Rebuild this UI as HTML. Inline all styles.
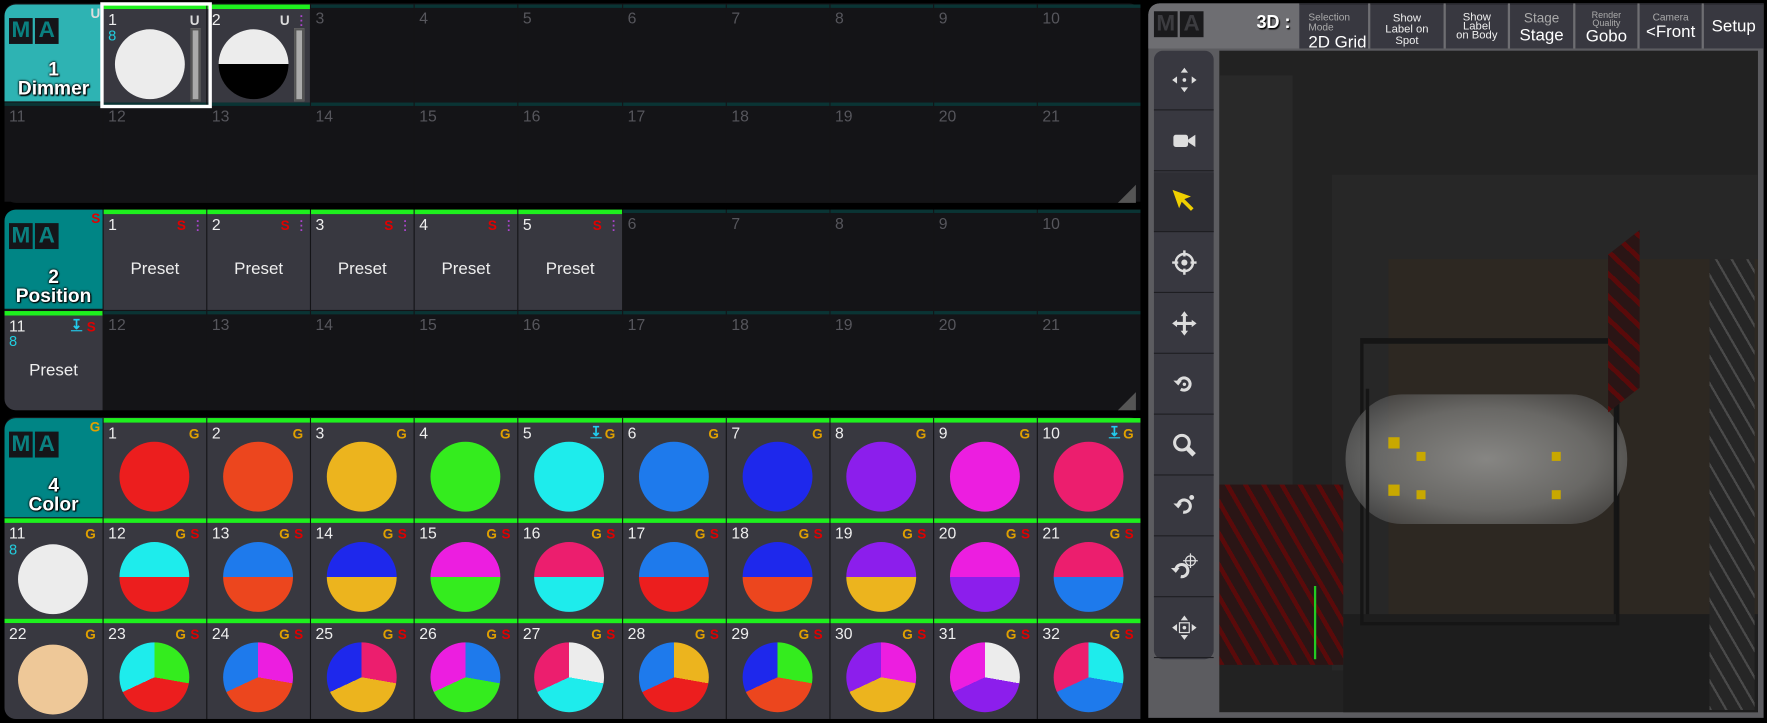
<!DOCTYPE html>
<html><head><meta charset="utf-8">
<style>
*{box-sizing:border-box;margin:0;padding:0}
body{width:1767px;height:723px;background:#000;position:relative;overflow:hidden;font-family:"Liberation Sans",sans-serif}
#w{position:absolute;left:0;top:0;width:1568px;height:642px;transform:scale(1.1269);transform-origin:0 0}
.a{position:absolute}
.win{position:absolute;background:#141417;border-radius:10px;overflow:hidden}
.c{position:absolute;background:#141417}
.c.e{border-top:3px solid #0a3434}
.c.f{background:#383840;border-top:4px solid #1ef01e}
.n{position:absolute;left:4px;top:1px;font-size:14px;color:#56565c}
.f .n{color:#eee}
.ci{position:absolute;border-radius:50%;width:62px;height:62px;left:14px;top:17px}
.hd{position:absolute;background:#008585;border-radius:10px 0 0 0}
.ma{position:absolute;left:4px;top:12px;display:flex;gap:2px}
.ma span{background:#151519;color:#0a8080;font-weight:bold;font-size:20px;width:21px;height:23px;text-align:center;line-height:23px}
.ht{position:absolute;left:0;width:87px;text-align:center;color:#fff;font-weight:bold;font-size:17px;line-height:17px;text-shadow:0 0 2px #000,0 0 2px #000,1px 1px 1px #000}
.bd{position:absolute;font-weight:bold;font-size:12px;top:3px}
.G{color:#e0a000}.S{color:#e00000}.U{color:#ddd}
.pre{position:absolute;left:0;right:0;top:40px;text-align:center;color:#eee;font-size:15px}
.tb{position:absolute;background:#383840;border-top:1px solid #23232a;color:#ddd;text-align:center}
.btn{position:absolute;left:1024px;width:53px;height:53px;border-bottom:1px solid #1e1e22;display:flex;align-items:center;justify-content:center}
</style></head><body><div id="w">

<div class="win" style="left:4px;top:3px;width:1008px;height:177px"></div>
<div class="win" style="left:4px;top:186px;width:1008px;height:178px"></div>
<div class="win" style="left:4px;top:370px;width:1008px;height:268px"></div>
<div id="g"></div>

<div class="a" style="left:1019px;top:3px;width:546px;height:634px;background:#5c5c60;border-radius:10px 0 0 0"></div>
<div class="a" style="left:1019px;top:3px;width:546px;height:40px;background:#6e6e72;border-radius:10px 0 0 0"></div>
<div class="ma" style="left:1024px;top:10px"><span style="color:#3c3c40;background:#1a1a1c">M</span><span style="color:#3c3c40;background:#1a1a1c">A</span></div>
<div class="a" style="left:1115px;top:12px;font-size:16px;font-weight:bold;color:#fff;text-shadow:1px 1px 1px #000">3D :</div>
<div class="tb" style="left:1153px;top:3px;width:61px;height:40px"><div style="font-size:9px;color:#aaa;text-align:left;padding-left:8px;line-height:9px;margin-top:7px">Selection<br>Mode</div><div style="font-size:15px;color:#fff;text-align:left;padding-left:8px">2D Grid</div></div>
<div class="tb" style="left:1216px;top:3px;width:65px;height:40px;font-size:10px;line-height:10px;padding-top:8px;color:#eee">Show<br>Label on<br>Spot</div>
<div class="tb" style="left:1283px;top:3px;width:55px;height:40px;font-size:10px;line-height:8px;padding-top:8px;color:#eee">Show<br>Label<br>on Body</div>
<div class="tb" style="left:1340px;top:3px;width:56px;height:40px"><div style="font-size:12px;color:#aaa;margin-top:5px">Stage</div><div style="font-size:15px;color:#fff">Stage</div></div>
<div class="tb" style="left:1398px;top:3px;width:55px;height:40px"><div style="font-size:8px;color:#aaa;line-height:7px;margin-top:6px">Render<br>Quality</div><div style="font-size:15px;color:#fff">Gobo</div></div>
<div class="tb" style="left:1455px;top:3px;width:55px;height:40px"><div style="font-size:9px;color:#aaa;margin-top:6px">Camera</div><div style="font-size:15px;color:#fff">&lt;Front</div></div>
<div class="tb" style="left:1512px;top:3px;width:53px;height:40px;font-size:15px;color:#fff;padding-top:11px">Setup</div>

<div class="a" style="left:1082px;top:45px;width:478px;height:587px;background:#222;overflow:hidden">
 <div class="a" style="left:0;top:22px;width:65px;height:520px;background:#292929"></div>
 <div class="a" style="left:100px;top:110px;width:380px;height:440px;background:#272727"></div>
 <div class="a" style="left:150px;top:185px;width:330px;height:330px;background:#2d2822"></div>
 <div class="a" style="left:110px;top:500px;width:370px;height:90px;background:#1d1d1d"></div>
 <div class="a" style="left:125px;top:255px;width:230px;height:255px;border:3px solid #151515;border-top-width:5px"></div>
 <div class="a" style="left:112px;top:305px;width:250px;height:115px;border-radius:20%/50%;background:radial-gradient(ellipse at center,rgba(150,150,148,.85) 0%,rgba(120,120,118,.8) 55%,rgba(90,90,90,.6) 85%,rgba(60,60,60,0) 100%)"></div>
 <div class="a" style="left:130px;top:300px;width:3px;height:200px;background:#151515"></div>
 <div class="a" style="left:350px;top:300px;width:3px;height:200px;background:#151515"></div>
 <div class="a" style="left:0;top:385px;width:110px;height:160px;background:repeating-linear-gradient(60deg,#5a0a0a 0 4px,#2a1515 4px 14px)"></div>
 <div class="a" style="left:345px;top:170px;width:28px;height:140px;background:repeating-linear-gradient(60deg,#5a0a0a 0 3px,#2a1515 3px 10px);transform:skewY(-38deg)"></div>
 <div class="a" style="left:435px;top:185px;width:40px;height:400px;background:repeating-linear-gradient(60deg,#4a4a4a 0 2px,#262626 2px 12px)"></div>
 <div class="a" style="left:150px;top:343px;width:10px;height:10px;background:#c8a800"></div>
 <div class="a" style="left:150px;top:385px;width:10px;height:10px;background:#c8a800"></div>
 <div class="a" style="left:175px;top:356px;width:8px;height:8px;background:#c8a800"></div>
 <div class="a" style="left:175px;top:390px;width:8px;height:8px;background:#c8a800"></div>
 <div class="a" style="left:295px;top:356px;width:8px;height:8px;background:#c8a800"></div>
 <div class="a" style="left:295px;top:390px;width:8px;height:8px;background:#c8a800"></div>
 <div class="a" style="left:84px;top:475px;width:2px;height:65px;background:#2c2"></div>
</div>

<div class="a" style="left:1024px;top:45px;width:53px;height:540px;background:#383840;border-radius:8px"></div>
<div id="tb"></div>
</div>
<script>
var g='';
var xs=[];for(var i=0;i<10;i++)xs.push(Math.round(92+i*92.1));
function W(i){return (i==9?1012:xs[i+1]-1)-xs[i];}
function cell(i,y,h,num,filled,inner){
 g+='<div class="c '+(filled?'f':'e')+'" style="left:'+xs[i]+'px;top:'+y+'px;width:'+W(i)+'px;height:'+h+'px"><div class="n">'+num+'</div>'+(inner||'')+'</div>';
}
function badge(t){
 var s='',r=6;for(var k=t.length-1;k>=0;k--){var b=t[k];
  if(b=='D') s+='<div class="bd" style="right:'+r+'px;color:#2ce;top:1px;text-decoration:underline">&#8615;</div>';
  else if(b=='P') s+='<div class="bd" style="right:'+r+'px;color:#a4c;top:2px;font-size:11px;line-height:4px">.<br>.<br>.</div>';
  else s+='<div class="bd '+b+'" style="right:'+r+'px">'+b+'</div>';
  r+=12;}
 return s;}
function hdr(y,h,num,name,bg,bdg){
 g+='<div class="hd" style="left:4px;top:'+y+'px;width:87px;height:'+h+'px;background:'+bg+'"><div class="ma"><span>M</span><span>A</span></div>'+
 '<div class="ht" style="top:'+(h-37)+'px">'+num+'<br>'+name+'</div>'+(bdg?'<div class="bd '+bdg+'" style="right:2px;top:1px">'+bdg+'</div>':'')+'</div>';
}
hdr(4,86,1,'Dimmer','#2eb3b3','U');
var fader='<div class="a" style="right:5px;top:17px;width:9px;height:65px;background:#aaa;border:2px solid #555"></div>';
cell(0,4,87,'1',1,badge(['U'])+'<div class="a" style="left:4px;top:16px;color:#2cd;font-size:13px">8</div><div class="ci" style="left:10px;top:18px;background:#ececec"></div>'+fader);
cell(1,4,87,'2',1,badge(['U','P'])+'<div class="ci" style="left:10px;top:18px;background:linear-gradient(#ececec 50%,#000 50%)"></div>'+fader);
for(var i=2;i<10;i++)cell(i,4,87,i+1,0);
g+='<div class="c e" style="left:4px;top:91px;width:87px;height:88px"><div class="n">11</div></div>';
for(var i=0;i<10;i++)cell(i,91,88,i+12,0);
g+='<div class="a" style="left:89px;top:2px;width:99px;height:94px;border:3px solid #fff"></div>';
hdr(186,88,2,'Position','#008585','S');
for(var i=0;i<10;i++){ if(i<5)cell(i,186,89,i+1,1,badge(['S','P'])+'<div class="pre">Preset</div>'); else cell(i,186,89,i+1,0);}
g+='<div class="c f" style="left:4px;top:276px;width:87px;height:88px;border-radius:0 0 0 10px"><div class="n">11</div>'+badge(['D','S'])+'<div class="a" style="left:4px;top:15px;color:#2cd;font-size:13px">8</div><div class="pre" style="top:40px">Preset</div></div>';
for(var i=0;i<10;i++)cell(i,276,88,i+12,0);
hdr(371,88,4,'Color','#008585','G');
var c1=['#ec1e1e','#ec461e','#ecb41e','#34ec1e','#1eecec','#1e7aec','#1e28ec','#8c1eec','#ec1ee0','#ec1e6e'];
for(var i=0;i<10;i++)cell(i,371,89,i+1,1,badge(i==4||i==9?['D','G']:['G'])+'<div class="ci" style="background:'+c1[i]+'"></div>');
var c2=[['#1eecec','#ec1e1e'],['#1e7aec','#ec461e'],['#1e28ec','#ecb41e'],['#ec1ee0','#34ec1e'],['#ec1e6e','#1eecec'],['#1e7aec','#ec1e1e'],['#1e28ec','#ec461e'],['#8c1eec','#ecb41e'],['#ec1ee0','#8c1eec'],['#ec1e6e','#1e7aec']];
g+='<div class="c f" style="left:4px;top:460px;width:87px;height:89px"><div class="n">11</div>'+badge(['G'])+'<div class="a" style="left:4px;top:16px;color:#2cd;font-size:13px">8</div><div class="ci" style="left:12px;top:19px;background:#ececec"></div></div>';
for(var i=0;i<10;i++)cell(i,460,89,i+12,1,badge(['G','S'])+'<div class="ci" style="background:linear-gradient('+c2[i][0]+' 50%,'+c2[i][1]+' 50%)"></div>');
var c3=[['#34ec1e','#ec1e1e','#1eecec'],['#ec1ee0','#ec461e','#1e7aec'],['#ec1e6e','#ecb41e','#1e28ec'],['#1e7aec','#34ec1e','#ec1ee0'],['#ececec','#1eecec','#ec1e6e'],['#ecb41e','#ec1e1e','#1e7aec'],['#34ec1e','#ec461e','#1e28ec'],['#ec1ee0','#ecb41e','#8c1eec'],['#ececec','#8c1eec','#ec1ee0'],['#1eecec','#1e7aec','#ec1e6e']];
g+='<div class="c f" style="left:4px;top:549px;width:87px;height:89px;border-radius:0 0 0 10px"><div class="n">22</div>'+badge(['G'])+'<div class="ci" style="left:12px;top:19px;background:#eec898"></div></div>';
for(var i=0;i<10;i++){var p=c3[i];cell(i,549,89,i+23,1,badge(['G','S'])+'<div class="ci" style="background:conic-gradient('+p[0]+' 0 100deg,'+p[1]+' 100deg 245deg,'+p[2]+' 245deg 360deg)"></div>');}
[164,348].forEach(function(y){g+='<div class="a" style="left:992px;top:'+y+'px;width:0;height:0;border-left:16px solid transparent;border-bottom:16px solid #555"></div>';});
document.getElementById('g').innerHTML=g;
var S='<svg width="26" height="26" viewBox="0 0 24 24" fill="#ddd" stroke="#ddd">';
var arrows4='<path stroke="none" d="M12 2l3 4h-6zM12 22l3-4h-6zM2 12l4-3v6zM22 12l-4-3v6z"/>';
var ic=[
 S+arrows4+'<circle cx="12" cy="12" r="1.5" stroke="none"/></svg>',
 S+'<rect x="3" y="7" width="12" height="10" rx="2" stroke="none"/><path stroke="none" d="M15 11l6-4v10l-6-4z"/></svg>',
 '<svg width="28" height="28" viewBox="0 0 24 24"><path fill="#f0d000" d="M3 3l14 5-5 2 7 7-2 2-7-7-2 5z"/></svg>',
 S+'<circle cx="12" cy="12" r="7" fill="none" stroke-width="2"/><circle cx="12" cy="12" r="2.5" stroke="none"/><path stroke-width="2" d="M12 2v5M12 17v5M2 12h5M17 12h5"/></svg>',
 S+arrows4+'<path stroke-width="2.5" d="M12 5v14M5 12h14"/></svg>',
 S+'<path fill="none" stroke-width="2.5" d="M7 10a5 5 0 1 1 2 6"/><path stroke="none" d="M3 9h7l-3 4z"/><circle cx="12" cy="12" r="1.4" stroke="none"/></svg>',
 S+'<circle cx="10" cy="10" r="6" fill="none" stroke-width="2.5"/><path stroke-width="4" d="M14 14l6 6"/></svg>',
 S+'<path fill="none" stroke-width="2.5" d="M7 11a5 5 0 1 1 4 6"/><path stroke="none" d="M3 10h7l-3 4z"/><circle cx="18" cy="5" r="2" stroke="none"/></svg>',
 S+'<path fill="none" stroke-width="2.5" d="M5 14a5 5 0 1 1 4 6"/><path stroke="none" d="M1 13h7l-3 4z"/><circle cx="17" cy="7" r="4" fill="none" stroke-width="1"/><path stroke-width="1" d="M17 1v12M11 7h12"/></svg>',
 S+arrows4+'<rect x="8" y="8" width="8" height="8" fill="none" stroke-width="1"/><circle cx="12" cy="12" r="1.5" stroke="none"/></svg>'];
var t='';for(var k=0;k<10;k++){t+='<div class="btn" style="top:'+(45+k*54)+'px;'+(k==2?'background:#2e2e34;':'')+'">'+ic[k]+'</div>';}
document.getElementById('tb').innerHTML=t;
</script>
</body></html>
